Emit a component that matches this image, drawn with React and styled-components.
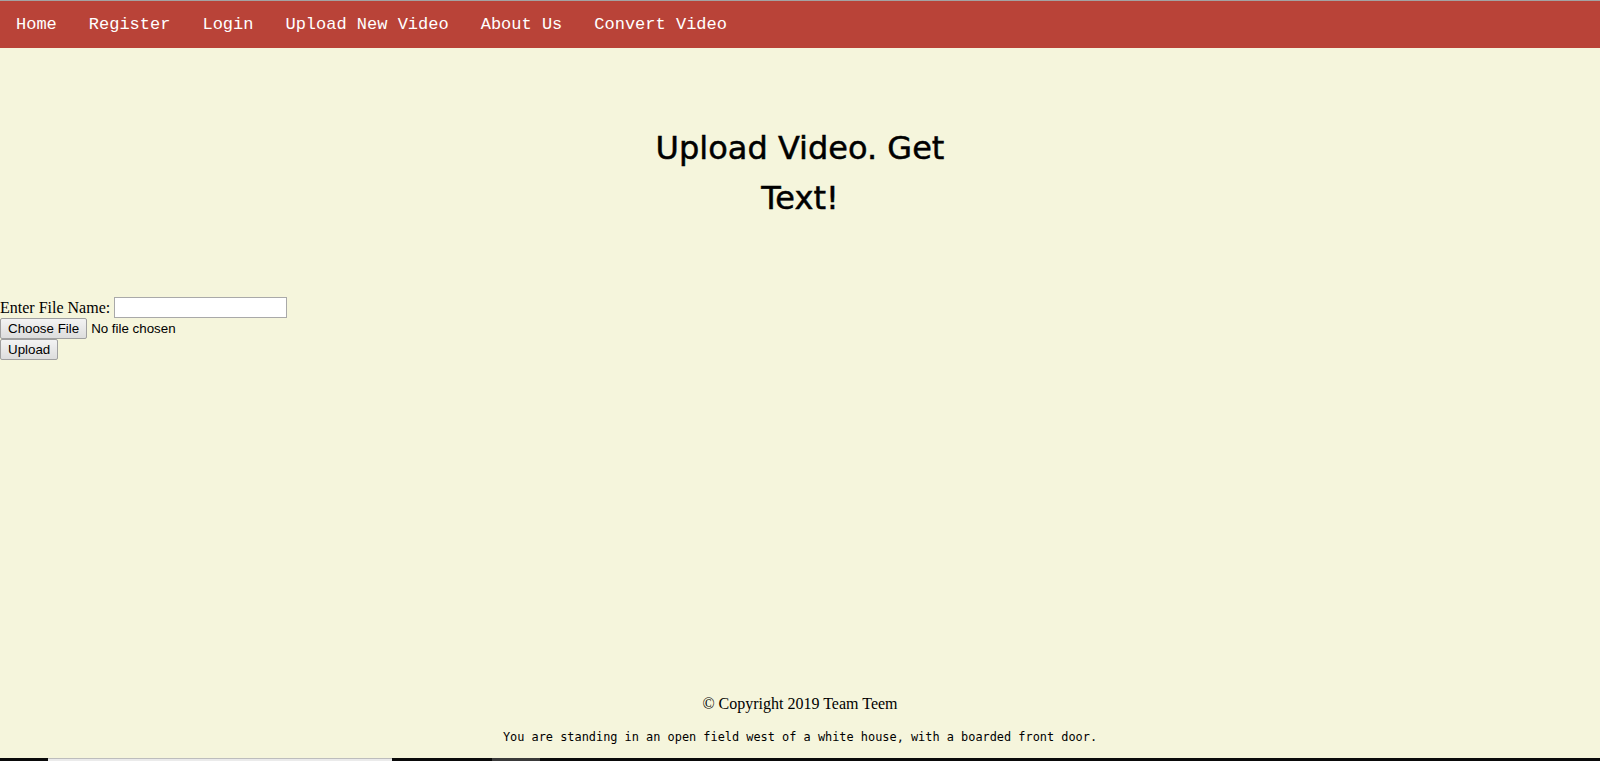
import React from "react";
import styled, { createGlobalStyle } from "styled-components";

const Global = createGlobalStyle`
  html, body { margin: 0; padding: 0; }
  body {
    background: #f5f5dc;
    font-family: "Liberation Serif", "Times New Roman", serif;
    font-size: 16px;
    color: #000;
  }
`;

const Page = styled.div`
  height: 761px;
  display: flex;
  flex-direction: column;
  overflow: hidden;
`;

const Nav = styled.nav`
  display: flex;
  align-items: center;
  height: 47px;
  background: #b94338;
  border-top: 1px solid #a3a3a3;
  flex-shrink: 0;
`;

const NavLink = styled.a`
  padding: 0 16px;
  color: #fff;
  font-family: "Liberation Mono", "Courier New", monospace;
  font-size: 17px;
  text-decoration: none;
  white-space: nowrap;
`;

const Heading = styled.h1`
  width: 320px;
  margin: 75px auto 0;
  text-align: center;
  font-family: "DejaVu Sans", Verdana, sans-serif;
  font-size: 32px;
  font-weight: normal;
  line-height: 50px;
  -webkit-text-stroke: 0.5px #000;
`;

const Form = styled.form`
  margin-top: 74px;
  display: flex;
  flex-direction: column;
  align-items: flex-start;
`;

const Row = styled.div`
  display: flex;
  align-items: center;
  min-height: 21px;
  line-height: 20px;
`;

const TextInput = styled.input`
  width: 173px;
  height: 21px;
  box-sizing: border-box;
  margin: 0 0 0 4px;
  border: 1px solid #a9a9a9;
  background: #fff;
  padding: 1px 2px;
  font-size: 13.33px;
`;

const Btn = styled.button`
  font-family: Arial, "Liberation Sans", sans-serif;
  font-size: 13.33px;
  height: 21px;
  padding: 0 7px;
  margin: 0;
  border: 1px solid #a0a0a0;
  border-radius: 2px;
  background: linear-gradient(#f3f3f3, #dddddd);
  color: #000;
  line-height: 17px;
`;

const FileLabel = styled.span`
  font-family: Arial, "Liberation Sans", sans-serif;
  font-size: 13.33px;
  margin-left: 4px;
`;

const Spacer = styled.div`
  flex: 1;
`;

const Footer = styled.footer`
  display: flex;
  flex-direction: column;
  align-items: center;
`;

const Copy = styled.p`
  margin: 0;
  font-size: 16px;
  line-height: 20px;
`;

const Quote = styled.p`
  margin: 15px 0 0;
  font-family: "DejaVu Sans Mono", Consolas, monospace;
  font-size: 11.9px;
  line-height: 16px;
`;

const Strip = styled.div`
  display: flex;
  height: 3px;
  margin-top: 13px;
  background: #0a0a0a;
  flex-shrink: 0;
`;

const Seg = styled.div`
  width: ${(p) => p.$w}px;
  margin-left: ${(p) => p.$l}px;
  background: ${(p) => p.$c};
  border-top: ${(p) => (p.$edge ? "1px solid #bdbdbd" : "none")};
`;

export default function App() {
  return (
    <Page>
      <Global />
      <Nav>
        <NavLink href="#">Home</NavLink>
        <NavLink href="#">Register</NavLink>
        <NavLink href="#">Login</NavLink>
        <NavLink href="#">Upload New Video</NavLink>
        <NavLink href="#">About Us</NavLink>
        <NavLink href="#">Convert Video</NavLink>
      </Nav>
      <Heading>Upload Video. Get Text!</Heading>
      <Form onSubmit={(e) => e.preventDefault()}>
        <Row>
          Enter File Name:
          <TextInput type="text" />
        </Row>
        <Row>
          <Btn type="button">Choose File</Btn>
          <FileLabel>No file chosen</FileLabel>
        </Row>
        <Row>
          <Btn type="submit">Upload</Btn>
        </Row>
      </Form>
      <Spacer />
      <Footer>
        <Copy>© Copyright 2019 Team Teem</Copy>
        <Quote>You are standing in an open field west of a white house, with a boarded front door.</Quote>
      </Footer>
      <Strip>
        <Seg $l={48} $w={344} $c="#ebebeb" $edge />
        <Seg $l={100} $w={48} $c="#3a3a3a" />
      </Strip>
    </Page>
  );
}
